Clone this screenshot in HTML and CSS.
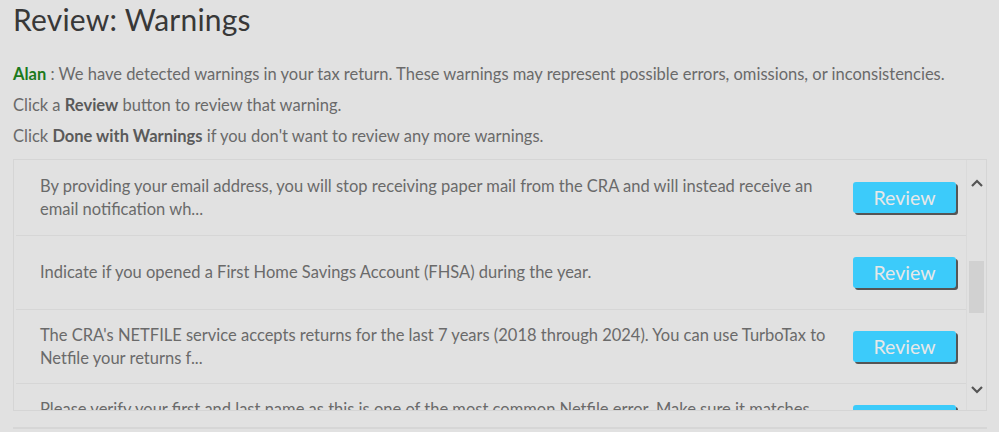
FILE: index.html
```html
<!DOCTYPE html>
<html>
<head>
<meta charset="utf-8">
<link rel="stylesheet" href="styles.css">
</head>
<body>
<div class="page">
  <h1 class="title">Review: Warnings</h1>
  <p class="intro"><span class="name">Alan</span> : We have detected warnings in your tax return. These warnings may represent possible errors, omissions, or inconsistencies.</p>
  <p class="intro">Click a <b>Review</b> button to review that warning.</p>
  <p class="intro">Click <b>Done with Warnings</b> if you don't want to review any more warnings.</p>
  <div class="box">
    <div class="list">
      <div class="row">
        <div class="msg">By providing your email address, you will stop receiving paper mail from the CRA and will instead receive an email notification wh...</div>
        <button class="btn">Review</button>
      </div>
      <div class="row">
        <div class="msg">Indicate if you opened a First Home Savings Account (FHSA) during the year.</div>
        <button class="btn">Review</button>
      </div>
      <div class="row">
        <div class="msg">The CRA's NETFILE service accepts returns for the last 7 years (2018 through 2024). You can use TurboTax to Netfile your returns f...</div>
        <button class="btn">Review</button>
      </div>
      <div class="row">
        <div class="msg">Please verify your first and last name as this is one of the most common Netfile error. Make sure it matches your records...</div>
        <button class="btn">Review</button>
      </div>
    </div>
    <div class="scrollbar">
      <svg class="arrow" width="14" height="10" viewBox="0 0 14 10"><path d="M2 8 L7 3 L12 8" fill="none" stroke="#555" stroke-width="2.2"/></svg>
      <div class="thumb"></div>
      <svg class="arrow down" width="14" height="10" viewBox="0 0 14 10"><path d="M2 2 L7 7 L12 2" fill="none" stroke="#555" stroke-width="2.2"/></svg>
    </div>
  </div>
  <div class="footer-line"></div>
</div>
</body>
</html>
```

FILE: styles.css
```css
html, body {
  margin: 0;
  padding: 0;
  background: #e1e1e1;
}
body {
  font-family: Lato, "Open Sans", sans-serif;
  color: #6a6a6a;
  overflow: hidden;
}
.page {
  padding: 0 12px 0 13px;
}
.title {
  margin: 0;
  padding-top: 1px;
  font-size: 30px;
  line-height: 36px;
  font-weight: 400;
  color: #383838;
  letter-spacing: 0.2px;
}
.intro {
  margin: 0;
  font-size: 16.5px;
  line-height: 31px;
}
.intro:first-of-type {
  margin-top: 22px;
}
.name {
  color: #1c7a1c;
  font-weight: 700;
}
.intro b {
  color: #5a5a5a;
  font-weight: 700;
}
.box {
  margin-top: 7px;
  height: 250px;
  border: 1px solid #d5d5d5;
  display: flex;
  overflow: hidden;
}
.list {
  flex: 1;
  padding-left: 2px;
  overflow: hidden;
}
.row {
  height: 73px;
  border-bottom: 1px solid #d6d6d6;
  display: flex;
  align-items: center;
  padding: 0 10px 0 24px;
}
.row:first-child {
  height: 75px;
  margin-top: 0;
}
.msg {
  flex: 1;
  font-size: 16.5px;
  line-height: 23px;
  padding-right: 20px;
}
.btn {
  width: 103px;
  height: 31px;
  background: #3ccbfa;
  border: none;
  border-radius: 3px;
  box-shadow: 2px 2px 0 #555;
  color: #e8e8e8;
  font-family: Lato, "Open Sans", sans-serif;
  font-size: 19.5px;
  padding: 0;
  flex: none;
}
.scrollbar {
  width: 19px;
  display: flex;
  flex-direction: column;
  align-items: center;
  border-left: 1px solid #dadada;
}
.arrow {
  margin-top: 18px;
  flex: none;
}
.thumb {
  width: 15px;
  height: 52px;
  background: #d1d1d1;
  margin-top: 73px;
}
.arrow.down {
  margin-top: 72px;
}
.footer-line {
  margin-top: 16px;
  height: 2px;
  background: #d6d6d6;
}
```
